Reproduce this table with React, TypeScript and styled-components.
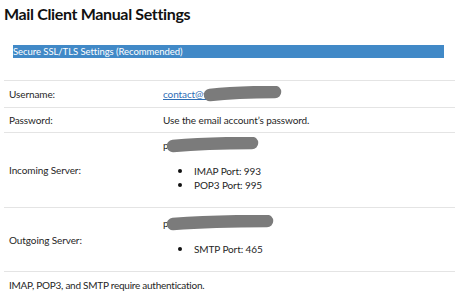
import React from 'react'
import styled, { createGlobalStyle } from 'styled-components'

const GlobalStyle = createGlobalStyle`
    body {
        margin: 0;
        background: #ffffff;
        font-family: Lato, "Open Sans", sans-serif;
        color: #262626;
    }
`
const Page = styled.div`
    width: 451px;
    padding: 0 0 0 4px;
`
const Title = styled.h1`
    margin: 0;
    padding-top: 4px;
    font-size: 16px;
    letter-spacing: -0.35px;
    line-height: 20px;
    font-weight: 700;
    color: #111111;
`
const Banner = styled.div`
    margin: 21px 0 0 9px;
    width: 431px;
    height: 13px;
    background: #4189c7;
    color: #ffffff;
    font-size: 9.5px;
    letter-spacing: -0.05px;
    line-height: 13px;
`
const Table = styled.div`
    margin-top: 22px;
    display: grid;
    grid-template-columns: 159px 1fr;
    border-bottom: 1px solid #e4e4e4;
    font-size: 10px;
    letter-spacing: -0.1px;
    line-height: 14px;
`
const Label = styled.div`
    display: flex;
    align-items: center;
    padding-left: 5px;
    border-top: 1px solid #e4e4e4;
`
const Value = styled.div<{ $pad?: string }>`
    display: flex;
    flex-direction: column;
    justify-content: center;
    padding: ${p => p.$pad || '5px 0'};
    border-top: 1px solid #e4e4e4;
`
const Line = styled.div`
    display: flex;
    align-items: center;
    white-space: nowrap;
`
const Link = styled.a`
    color: #2f6eb5;
    text-decoration: underline;
`
const Ports = styled.ul`
    list-style: none;
    margin: 11px 0 0 0;
    padding: 0;
`
const Port = styled.li`
    display: flex;
    align-items: center;
    &::before {
        content: '';
        width: 4px;
        height: 4px;
        border-radius: 50%;
        background: #111111;
        margin: 0 12px 0 15px;
    }
`
const Footer = styled.p`
    margin: 6px 0 0 5px;
    font-size: 10px;
    letter-spacing: -0.25px;
    line-height: 14px;
`
const Blob = styled.svg`
    display: block;
    flex-shrink: 0;
`

const Redact: React.FC<{ width: number; offset: number }> = ({ width, offset }) => (
    <Blob width={width} height={16} viewBox={`0 0 ${width} 16`} style={{ marginLeft: offset }}>
        <path
            d={`M6 9 C ${width * 0.3} 7, ${width * 0.6} 6, ${width - 7} 6`}
            stroke="#7b7b7b"
            strokeWidth={12.5}
            strokeLinecap="round"
            fill="none"
        />
    </Blob>
)

const App: React.FC = () => {
    return (
        <Page>
            <GlobalStyle />
            <Title>Mail Client Manual Settings</Title>
            <Banner>Secure SSL/TLS Settings (Recommended)</Banner>
            <Table>
                <Label>Username:</Label>
                <Value>
                    <Line>
                        <Link href="#">contact@v</Link>
                        <Redact width={78} offset={-4} />
                    </Line>
                </Value>
                <Label>Password:</Label>
                <Value>Use the email account’s password.</Value>
                <Label>Incoming Server:</Label>
                <Value $pad="4px 0 15px">
                    <Line>
                        p<Redact width={92} offset={-2} />
                    </Line>
                    <Ports>
                        <Port>IMAP Port: 993</Port>
                        <Port>POP3 Port: 995</Port>
                    </Ports>
                </Value>
                <Label>Outgoing Server:</Label>
                <Value $pad="7px 0 15px">
                    <Line>
                        p<Redact width={107} offset={-2} />
                    </Line>
                    <Ports>
                        <Port>SMTP Port: 465</Port>
                    </Ports>
                </Value>
            </Table>
            <Footer>IMAP, POP3, and SMTP require authentication.</Footer>
        </Page>
    )
}

export default App
